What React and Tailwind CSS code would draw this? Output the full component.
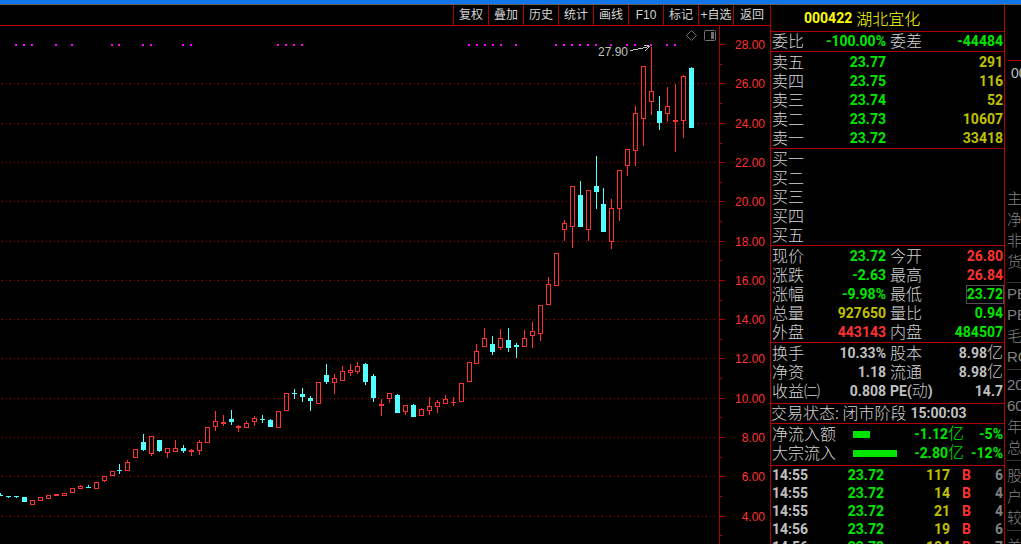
const toolbar = ["复权", "叠加", "历史", "统计", "画线", "F10", "标记", "+自选", "返回"];

const gridLines = [83, 123, 162, 201, 241, 280, 319, 358, 398, 437, 476, 516];
const axisTicks = [44, ...gridLines];
const minorTicks = [64, 103, 143, 182, 221, 260, 300, 339, 378, 417, 457, 496, 535];

const signalDots = [
  15, 23, 31, 55, 71, 111, 118, 142, 150, 182, 190, 277, 285, 293, 301, 468, 476, 484, 492, 500, 515,
  555, 563, 571, 579, 587, 595, 610, 626, 634, 650, 666, 674,
];

// [x, high, body top, body bottom, low, rising]
const candles = [
  [0, 493, 495, 496, 496, 0],
  [8, 496, 496, 497, 498, 0],
  [16, 496, 496, 497, 498, 0],
  [24, 497, 497, 502, 502, 0],
  [32, 500, 500, 505, 505, 1],
  [40, 497, 497, 501, 501, 1],
  [48, 495, 495, 499, 499, 1],
  [56, 494, 494, 496, 496, 1],
  [64, 493, 493, 496, 496, 1],
  [72, 488, 488, 493, 493, 1],
  [80, 485, 486, 489, 489, 1],
  [88, 485, 487, 488, 488, 0],
  [96, 482, 482, 489, 489, 1],
  [104, 476, 476, 481, 482, 1],
  [112, 471, 471, 476, 476, 1],
  [119, 464, 470, 471, 474, 0],
  [127, 460, 462, 471, 471, 1],
  [135, 449, 449, 458, 458, 1],
  [143, 434, 442, 450, 451, 0],
  [151, 436, 436, 454, 456, 1],
  [159, 440, 440, 451, 452, 0],
  [167, 448, 448, 453, 458, 1],
  [175, 440, 448, 452, 452, 1],
  [183, 445, 448, 451, 453, 0],
  [191, 449, 450, 452, 456, 1],
  [199, 440, 442, 451, 455, 1],
  [207, 427, 427, 443, 443, 1],
  [215, 411, 421, 427, 431, 1],
  [223, 415, 422, 424, 426, 1],
  [231, 410, 419, 422, 425, 0],
  [238, 425, 426, 428, 432, 1],
  [246, 421, 423, 428, 428, 1],
  [254, 416, 418, 422, 426, 1],
  [262, 415, 419, 420, 423, 0],
  [270, 419, 420, 427, 427, 0],
  [278, 411, 411, 428, 428, 1],
  [286, 393, 393, 411, 411, 1],
  [294, 389, 393, 394, 399, 0],
  [302, 388, 394, 397, 402, 0],
  [310, 396, 398, 401, 411, 0],
  [318, 382, 382, 404, 404, 1],
  [326, 364, 375, 382, 384, 0],
  [334, 374, 378, 383, 394, 1],
  [342, 366, 371, 381, 381, 1],
  [350, 364, 370, 373, 376, 1],
  [357, 362, 366, 372, 374, 1],
  [365, 363, 364, 382, 385, 0],
  [373, 374, 376, 398, 402, 0],
  [381, 399, 404, 406, 416, 1],
  [389, 393, 393, 399, 403, 1],
  [397, 394, 395, 413, 413, 0],
  [405, 405, 405, 412, 415, 1],
  [413, 404, 405, 417, 417, 0],
  [421, 408, 409, 416, 416, 1],
  [429, 397, 406, 411, 415, 1],
  [437, 400, 402, 407, 413, 1],
  [445, 395, 399, 404, 404, 1],
  [453, 397, 402, 403, 406, 1],
  [461, 383, 383, 402, 402, 1],
  [469, 362, 362, 382, 382, 1],
  [476, 344, 351, 364, 364, 1],
  [484, 328, 338, 347, 347, 1],
  [492, 336, 344, 352, 355, 0],
  [500, 329, 338, 348, 350, 1],
  [508, 328, 340, 348, 352, 0],
  [516, 343, 345, 347, 358, 0],
  [524, 330, 338, 347, 347, 1],
  [532, 322, 331, 336, 348, 1],
  [540, 305, 305, 334, 341, 1],
  [548, 277, 284, 305, 305, 1],
  [556, 253, 253, 286, 286, 1],
  [564, 220, 223, 230, 241, 1],
  [572, 186, 186, 227, 248, 1],
  [580, 181, 195, 227, 227, 0],
  [588, 190, 190, 230, 241, 1],
  [596, 156, 186, 192, 209, 0],
  [603, 188, 204, 232, 232, 0],
  [611, 199, 208, 242, 249, 1],
  [619, 170, 170, 209, 221, 1],
  [627, 149, 149, 166, 176, 1],
  [635, 106, 113, 151, 166, 1],
  [643, 66, 66, 119, 146, 1],
  [651, 47, 91, 102, 115, 1],
  [659, 96, 111, 123, 130, 0],
  [667, 87, 106, 114, 122, 1],
  [675, 84, 120, 122, 152, 1],
  [683, 75, 76, 121, 138, 1],
  [691, 67, 68, 128, 128, 0],
];

const asks = [
  ["卖五", "23.77", "291"],
  ["卖四", "23.75", "116"],
  ["卖三", "23.74", "52"],
  ["卖二", "23.73", "10607"],
  ["卖一", "23.72", "33418"],
];

const bids = [
  ["买一", "", ""],
  ["买二", "", ""],
  ["买三", "", ""],
  ["买四", "", ""],
  ["买五", "", ""],
];

const GREEN = "text-[#00e600]";
const RED = "text-[#ff3232]";
const YELLOW = "text-[#c0c000]";
const GRAY = "text-[#c0c0c0]";

const quotes = [
  ["现价", "23.72", GREEN, "今开", "26.80", RED],
  ["涨跌", "-2.63", GREEN, "最高", "26.84", RED],
  ["涨幅", "-9.98%", GREEN, "最低", "23.72", GREEN],
  ["总量", "927650", YELLOW, "量比", "0.94", GREEN],
  ["外盘", "443143", RED, "内盘", "484507", GREEN],
];

const fundamentals = [
  ["换手", "10.33%", GRAY, "股本", "8.98亿", GRAY],
  ["净资", "1.18", GRAY, "流通", "8.98亿", GRAY],
  ["收益㈡", "0.808", GRAY, "PE(动)", "14.7", GRAY],
];

const flows = [
  { name: "净流入额", bar: "w-[17px]", amount: "-1.12", percent: "-5%" },
  { name: "大宗流入", bar: "w-11", amount: "-2.80", percent: "-12%" },
];

const trades = [
  ["14:55", "23.72", "117", "B", "6"],
  ["14:55", "23.72", "14", "B", "4"],
  ["14:55", "23.72", "21", "B", "4"],
  ["14:56", "23.72", "19", "B", "6"],
  ["14:56", "23.72", "104", "B", "7"],
];

const LABEL = "font-['Noto_Sans_CJK_SC',sans-serif] text-base font-light leading-[17px] text-[#d4d4d4]";
const NUMBER = "font-[Roboto,'Noto_Sans_CJK_SC',sans-serif] text-sm font-bold leading-[19px]";
const UNIT = "text-base font-light leading-none";

function Candle({ candle }) {
  const [x, high, top, bottom, low, rising] = candle;
  const color = rising ? "#ff3232" : "#54ffff";
  const height = bottom - top;

  return (
    <g fill={color}>
      {top > high && <rect x={x} y={high} width="1" height={top - high} />}
      {low > bottom && <rect x={x} y={bottom} width="1" height={low - bottom} />}
      {rising && height > 2 ? (
        <rect x={x - 1.5} y={top + 0.5} width="4" height={height - 1} fill="#000" stroke={color} />
      ) : (
        <rect x={x - 2} y={top} width="5" height={height} />
      )}
    </g>
  );
}

function Chart() {
  return (
    <svg
      className="block h-[518px] w-full"
      viewBox="0 26 770 518"
      preserveAspectRatio="xMaxYMin meet"
      shapeRendering="crispEdges"
      role="img"
      aria-label="K线"
    >
      {gridLines.map((y) => (
        <line key={y} x1="2" x2="718" y1={y + 0.5} y2={y + 0.5} stroke="#b00000" strokeDasharray="1 3" />
      ))}
      <rect x="719" y="26" width="1" height="518" fill="#b00000" />
      {axisTicks.map((y) => (
        <rect key={y} x="720" y={y} width="5" height="1" fill="#b00000" />
      ))}
      {minorTicks.map((y) => (
        <rect key={y} x="720" y={y} width="2" height="1" fill="#b00000" />
      ))}
      {axisTicks.map((y, index) => (
        <text
          key={y}
          x="765"
          y={y + 5}
          textAnchor="end"
          fill="#ff3232"
          className="font-['Liberation_Sans',sans-serif] text-xs"
        >
          {(28 - index * 2).toFixed(2)}
        </text>
      ))}
      {candles.map((candle) => (
        <Candle key={candle[0]} candle={candle} />
      ))}
      {signalDots.map((x) => (
        <rect key={x} x={x} y="44" width="2" height="2" fill="#ff00ff" />
      ))}
      <text x="598" y="56" fill="#c0c0c0" className="font-['Liberation_Sans',sans-serif] text-xs">
        27.90
      </text>
      <path
        d="M630 50.5h3M633 49.5h5M638 48.5h5M643 47.5h4M647 46.5h3M644 45.5h5M648 47.5h1M647 48.5h1M646 49.5h1M645 50.5h1"
        stroke="#c0c0c0"
        fill="none"
      />
      <path d="M691.5 30.5l5 5-5 5-5-5z" stroke="#707070" fill="none" shapeRendering="auto" />
      <rect x="704.5" y="30.5" width="11" height="10" rx="1" stroke="#707070" fill="none" shapeRendering="auto" />
      <rect x="711" y="32" width="3" height="7" fill="#707070" />
    </svg>
  );
}

function DepthTable({ rows }) {
  return (
    <div className="border-b border-[#b00000] pt-px">
      <table className="w-full table-fixed">
        <tbody>
          {rows.map(([label, price, volume]) => (
            <tr key={label} className="h-[19px] align-top">
              <th className={`w-12 p-0 pl-px text-left ${LABEL}`}>{label}</th>
              <td className={`w-[67px] p-0 text-right ${NUMBER} ${GREEN}`}>{price}</td>
              <td className={`p-0 pr-px text-right ${NUMBER} ${YELLOW}`}>{volume}</td>
            </tr>
          ))}
        </tbody>
      </table>
    </div>
  );
}

function PairRow({ row }) {
  const [leftLabel, leftValue, leftColor, rightLabel, rightValue, rightColor] = row;
  return (
    <div className="grid h-[19px] grid-cols-[116px_1fr] pl-px">
      <div className="flex justify-between pr-0.5">
        <span className={`whitespace-nowrap ${LABEL}`}>{leftLabel}</span>
        <span className={`${NUMBER} ${leftColor}`}>{leftValue}</span>
      </div>
      <div className="flex justify-between pl-0.5">
        {rightLabel.startsWith("PE") ? (
          <span className={`${NUMBER} ${GRAY}`}>
            PE(<span className={UNIT}>动</span>)
          </span>
        ) : (
          <span className={LABEL}>{rightLabel}</span>
        )}
        <span
          className={`pr-px ${NUMBER} ${rightColor} ${
            rightLabel === "最低" ? "pl-px outline outline-[#505050] -outline-offset-1" : ""
          }`}
        >
          {rightValue.replace("亿", "")}
          {rightValue.endsWith("亿") && <span className={UNIT}>亿</span>}
        </span>
      </div>
    </div>
  );
}

function QuotePanel() {
  return (
    <section className="w-[235px] shrink-0 border-x border-[#b00000]">
      <h1 className="flex h-[27px] items-center gap-1 border-b border-[#b00000] pl-[33px] text-[#ffff00]">
        <span className={NUMBER}>000422</span>
        <span className="font-['Noto_Sans_CJK_SC',sans-serif] text-base font-light leading-[17px]">湖北宜化</span>
      </h1>
      <div className="border-b border-[#b00000]">
        <PairRow row={["委比", "-100.00%", GREEN, "委差", "-44484", GREEN]} />
      </div>
      <DepthTable rows={asks} />
      <DepthTable rows={bids} />
      <div className="border-b border-[#b00000] pt-px">
        {quotes.map((row) => (
          <PairRow key={row[0]} row={row} />
        ))}
      </div>
      <div className="border-b border-[#b00000] pt-px pb-0.5">
        {fundamentals.map((row) => (
          <PairRow key={row[0]} row={row} />
        ))}
      </div>
      <p className="flex gap-1 border-b border-[#b00000]">
        <span className={LABEL}>交易状态: 闭市阶段</span>
        <span className={`${NUMBER} ${GRAY}`}>15:00:03</span>
      </p>
      <div className="border-b border-[#b00000] pt-px pb-0.5">
        {flows.map((flow) => (
          <div key={flow.name} className="grid h-[19px] grid-cols-[81px_1fr_40px] pl-px">
            <span className={LABEL}>{flow.name}</span>
            <div className="flex items-center justify-between">
              <i className={`h-[7px] bg-[#00e600] ${flow.bar}`} />
              <span className={`${NUMBER} ${GREEN}`}>
                {flow.amount}
                <span className={UNIT}>亿</span>
              </span>
            </div>
            <span className={`pr-px text-right ${NUMBER} ${GREEN}`}>{flow.percent}</span>
          </div>
        ))}
      </div>
      <table className="w-full table-fixed font-[Roboto,sans-serif] text-sm font-bold leading-[18px]">
        <tbody>
          {trades.map(([time, price, volume, side, count], index) => (
            <tr key={index} className="h-[18px]">
              <td className={`w-12 p-0 pl-px ${GRAY}`}>{time}</td>
              <td className={`w-[65px] p-0 text-right ${GREEN}`}>{price}</td>
              <td className={`w-[66px] p-0 text-right ${YELLOW}`}>{volume}</td>
              <td className={`w-[21px] p-0 text-right ${RED}`}>{side}</td>
              <td className="p-0 pr-px text-right text-[#808080]">{count}</td>
            </tr>
          ))}
        </tbody>
      </table>
    </section>
  );
}

function SideStrip() {
  const text = "font-['Liberation_Sans','Noto_Sans_CJK_SC',sans-serif] text-[15px] font-light leading-[21px] text-[#808080]";
  return (
    <aside className="w-4 shrink-0 overflow-hidden pl-0.5 whitespace-nowrap">
      <div className="mt-[55px] border-t border-[#b00000] pt-0.5">
        <p className="pl-1 font-['Liberation_Sans',sans-serif] text-sm leading-[21px] text-[#c0c0c0]">00</p>
      </div>
      <div className={`mt-[104px] border-b border-[#333] pb-2.5 ${text}`}>
        {["主", "净", "非", "货"].map((item) => (
          <p key={item}>{item}</p>
        ))}
      </div>
      <div className={`border-b border-[#333] pb-0.5 ${text}`}>
        {["PE", "PB", "毛", "RO"].map((item) => (
          <p key={item}>{item}</p>
        ))}
      </div>
      <div className={`border-b border-[#333] pt-1 pb-0.5 ${text}`}>
        {["20", "60", "年", "总"].map((item) => (
          <p key={item}>{item}</p>
        ))}
      </div>
      <div className={`border-b border-[#333] pt-1 pb-0.5 ${text}`}>
        {["股", "户", "较"].map((item) => (
          <p key={item}>{item}</p>
        ))}
      </div>
      <p className={`pt-1 ${text}`}>关</p>
    </aside>
  );
}

export default function App() {
  return (
    <div className="h-screen overflow-hidden bg-black">
      <div className="h-[5px] border-b border-[#606060] bg-[#1177e8]" />
      <main className="flex">
        <div className="min-w-0 flex-1">
          <nav className="flex h-[21px] justify-end border-b border-[#b00000]">
            {toolbar.map((item) => (
              <button
                key={item}
                type="button"
                className="w-[35px] border-l border-[#b00000] font-['Liberation_Sans','Noto_Sans_CJK_SC',sans-serif] text-xs whitespace-nowrap text-[#d4d4d4] last:w-[37px]"
              >
                {item}
              </button>
            ))}
          </nav>
          <Chart />
        </div>
        <QuotePanel />
        <SideStrip />
      </main>
    </div>
  );
}
